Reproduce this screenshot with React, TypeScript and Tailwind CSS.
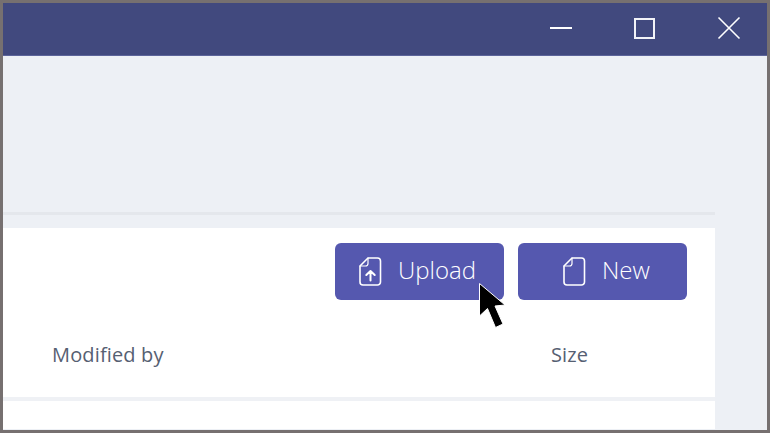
import React from 'react';

const FileIcon = ({ arrow }: { arrow?: boolean }) => (
  <svg width="23" height="29" viewBox="0 0 23 29" fill="none" stroke="#fff" strokeWidth="1.6" strokeLinejoin="round" strokeLinecap="round">
    <path d="M9 1H18.5a3 3 0 0 1 3 3V25a3 3 0 0 1-3 3H4a3 3 0 0 1-3-3V9Z" />
    <path d="M9 1V6.5A2.5 2.5 0 0 1 6.5 9H1" strokeWidth="1.2" />
    {arrow && <path d="M11.5 23.5V14M7.3 18 11.5 14l4.2 4" strokeWidth="2" />}
  </svg>
);

const ActionButton = ({ label, arrow, pad }: { label: string; arrow?: boolean; pad: string }) => (
  <button className={`${pad} w-[169px] h-[57px] flex items-center gap-[16px] rounded-md bg-[#5558af] text-[24px] font-light text-white`}>
    <FileIcon arrow={arrow} />
    <span className="-mt-[4px]">{label}</span>
  </button>
);

const Cursor = () => (
  <svg className="absolute left-[478px] top-[283px]" width="28" height="46" viewBox="0 0 28 46">
    <path d="M1.5 0.5 L1.5 33 L9.5 25.5 L17.5 44.5 L25 41 L17 23 L27 22 Z" fill="#000" stroke="#fff" strokeWidth="1" />
  </svg>
);

export default function App() {
  return (
    <div className="relative w-[771px] h-[435px] bg-white overflow-hidden font-['Open_Sans','Noto_Sans',sans-serif]">
      <div className="w-[770px] h-[433px] flex flex-col border-[3px] border-[#767070] bg-[#edf0f5]">
        {/* title bar */}
        <div className="h-[53px] shrink-0 flex items-center justify-end bg-[#41497e] border-b border-[#5c649a]">
          <div className="w-[22px] h-[2px] bg-white mr-[62px] -mt-[2px]" />
          <div className="w-[21px] h-[21px] border-2 border-[#f2f3f8] mr-[62px] -mt-[2px]" />
          <svg className="mr-[26px] -mt-[2px]" width="24" height="24" viewBox="0 0 24 24" stroke="#fff" strokeWidth="1.6">
            <path d="M1.5 1.5 22.5 22.5M22.5 1.5 1.5 22.5" />
          </svg>
        </div>

        {/* content */}
        <div className="flex-1 pt-[156px] pr-[52px]">
          <div className="h-[3px] bg-[#e4e7ec]" />
          <div className="mt-[13px] h-[169px] bg-white flex flex-col">
            <div className="flex justify-end gap-[14px] pt-[15px] pr-[28px]">
              <ActionButton label="Upload" arrow pad="pl-[24px]" />
              <ActionButton label="New" pad="pl-[45px]" />
            </div>
            <div className="flex mt-[42px] text-[20px] leading-[26px] tracking-[0.15px] text-[#566072]">
              <span className="ml-[49px] w-[499px]">Modified by</span>
              <span>Size</span>
            </div>
          </div>
          <div className="h-[4px] bg-[#eff1f5]" />
          <div className="h-[28px] bg-white" />
        </div>
      </div>
      <Cursor />
    </div>
  );
}
